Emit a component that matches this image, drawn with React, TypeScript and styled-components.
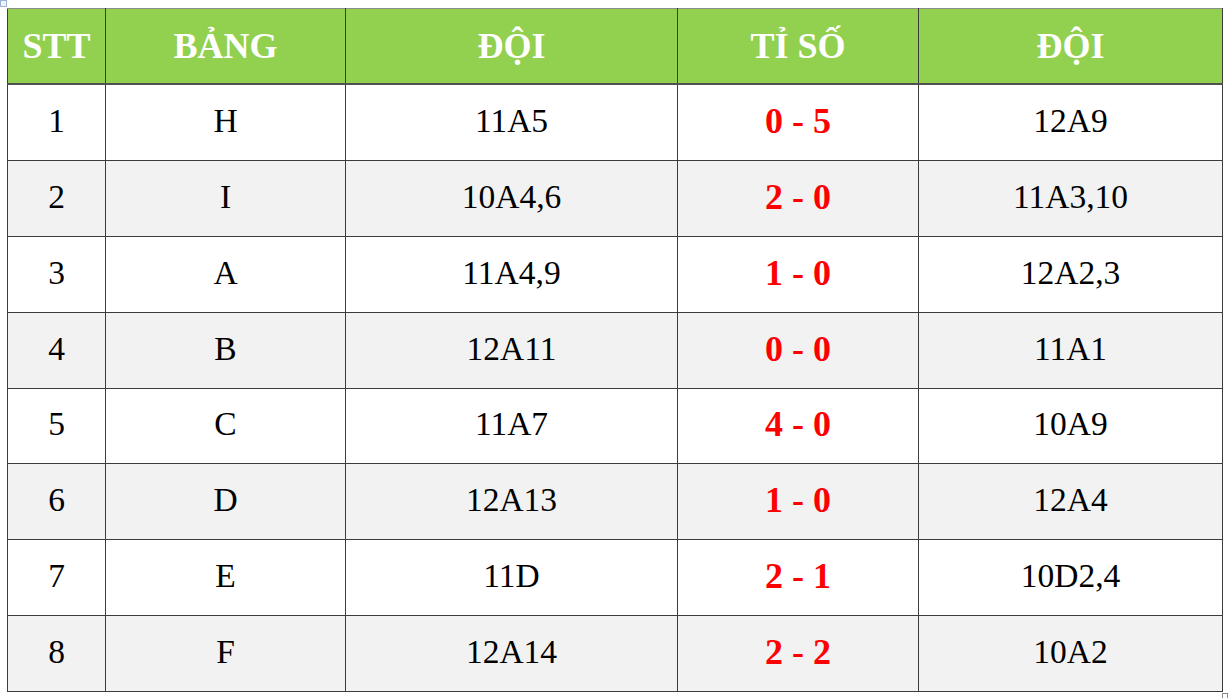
import styled, { createGlobalStyle } from "styled-components";

const GlobalStyle = createGlobalStyle`
  html, body {
    margin: 0;
    padding: 0;
    background: #ffffff;
  }
`;

const Page = styled.div`
  position: relative;
  width: 1230px;
  height: 698px;
  padding: 8px 0 0 7px;
  box-sizing: border-box;
`;

const MoveHandle = styled.div`
  position: absolute;
  left: 0;
  top: 0;
  width: 7px;
  height: 7px;
  border: 1px solid #9db3d6;
  box-sizing: border-box;
  background: #eef3fb;
`;

const ResizeHandle = styled.div`
  position: absolute;
  left: 1222px;
  top: 693px;
  width: 6px;
  height: 5px;
  border: 1px solid #8a8a8a;
  border-bottom: none;
  box-sizing: border-box;
`;

const Table = styled.table`
  width: 1215px;
  border-collapse: collapse;
  table-layout: fixed;
  font-family: "Liberation Serif", "Times New Roman", serif;
  color: #000000;
`;

const HeadCell = styled.th`
  height: 74px;
  padding: 0;
  background: #92d050;
  color: #ffffff;
  font-size: 36px;
  font-weight: bold;
  text-align: center;
  vertical-align: middle;
  border: 1px solid #3c3c3c;
  border-top-color: #8c8c8c;
  border-bottom: 2px solid #505050;
`;

const Row = styled.tr<{ $striped: boolean }>`
  background: ${(p) => (p.$striped ? "#f2f2f2" : "#ffffff")};
`;

const Cell = styled.td<{ $score?: boolean }>`
  height: 71.875px;
  padding: 0 0 3px;
  text-align: center;
  vertical-align: middle;
  border: 1px solid #3c3c3c;
  font-size: ${(p) => (p.$score ? "36px" : "33.5px")};
  font-weight: ${(p) => (p.$score ? "bold" : "normal")};
  color: ${(p) => (p.$score ? "#ff0000" : "#000000")};
`;

const columns = [
  { label: "STT", width: 98 },
  { label: "BẢNG", width: 240 },
  { label: "ĐỘI", width: 332 },
  { label: "TỈ SỐ", width: 241 },
  { label: "ĐỘI", width: 304 },
];

const matches = [
  { stt: 1, group: "H", home: "11A5", score: "0 - 5", away: "12A9" },
  { stt: 2, group: "I", home: "10A4,6", score: "2 - 0", away: "11A3,10" },
  { stt: 3, group: "A", home: "11A4,9", score: "1 - 0", away: "12A2,3" },
  { stt: 4, group: "B", home: "12A11", score: "0 - 0", away: "11A1" },
  { stt: 5, group: "C", home: "11A7", score: "4 - 0", away: "10A9" },
  { stt: 6, group: "D", home: "12A13", score: "1 - 0", away: "12A4" },
  { stt: 7, group: "E", home: "11D", score: "2 - 1", away: "10D2,4" },
  { stt: 8, group: "F", home: "12A14", score: "2 - 2", away: "10A2" },
];

function App() {
  return (
    <>
      <GlobalStyle />
      <Page>
        <MoveHandle />
        <Table>
          <colgroup>
            {columns.map((c, i) => (
              <col key={i} style={{ width: c.width }} />
            ))}
          </colgroup>
          <thead>
            <tr>
              {columns.map((c, i) => (
                <HeadCell key={i}>{c.label}</HeadCell>
              ))}
            </tr>
          </thead>
          <tbody>
            {matches.map((m) => (
              <Row key={m.stt} $striped={m.stt % 2 === 0}>
                <Cell>{m.stt}</Cell>
                <Cell>{m.group}</Cell>
                <Cell>{m.home}</Cell>
                <Cell $score>{m.score}</Cell>
                <Cell>{m.away}</Cell>
              </Row>
            ))}
          </tbody>
        </Table>
        <ResizeHandle />
      </Page>
    </>
  );
}

export default App;
